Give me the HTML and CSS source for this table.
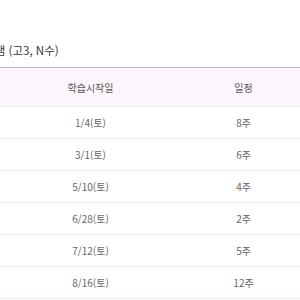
FILE: index.html
```html
<!DOCTYPE html>
<html lang="ko">
<head>
<meta charset="utf-8">
<link rel="stylesheet" href="styles.css">
</head>
<body>
<div class="page">
  <h2 class="title">프로그램 (고3, N수)</h2>
  <div class="table">
    <div class="row head">
      <div class="cell"></div>
      <div class="cell">학습시작일</div>
      <div class="cell">일정</div>
    </div>
    <div class="row"><div class="cell"></div><div class="cell">1/4(토)</div><div class="cell">8주</div></div>
    <div class="row"><div class="cell"></div><div class="cell">3/1(토)</div><div class="cell">6주</div></div>
    <div class="row"><div class="cell"></div><div class="cell">5/10(토)</div><div class="cell">4주</div></div>
    <div class="row"><div class="cell"></div><div class="cell">6/28(토)</div><div class="cell">2주</div></div>
    <div class="row"><div class="cell"></div><div class="cell">7/12(토)</div><div class="cell">5주</div></div>
    <div class="row"><div class="cell"></div><div class="cell">8/16(토)</div><div class="cell">12주</div></div>
  </div>
</div>
</body>
</html>
```
FILE: styles.css
```css
html, body {
  margin: 0;
  padding: 0;
  background: #fff;
  overflow: hidden;
}
body {
  font-family: "Noto Sans CJK KR", "Noto Sans", sans-serif;
  color: #666;
}
.page {
  width: 300px;
  height: 300px;
  overflow: hidden;
}
.title {
  margin: 40px 0 7px -37px;
  font-size: 11.5px;
  line-height: 20px;
  font-weight: 400;
  color: #333;
  white-space: nowrap;
}
.table {
  margin-left: -139px;
  width: 459px;
  border-top: 1px solid #b7b8d2;
}
.row {
  display: grid;
  grid-template-columns: 153px 153px 153px;
  height: 31px;
  border-bottom: 1px solid #f5e9f3;
  align-items: center;
  font-size: 10px;
}
.row.head {
  height: 38px;
  background: #fdf5fc;
  color: #555;
}
.cell {
  text-align: center;
  white-space: nowrap;
}
```
